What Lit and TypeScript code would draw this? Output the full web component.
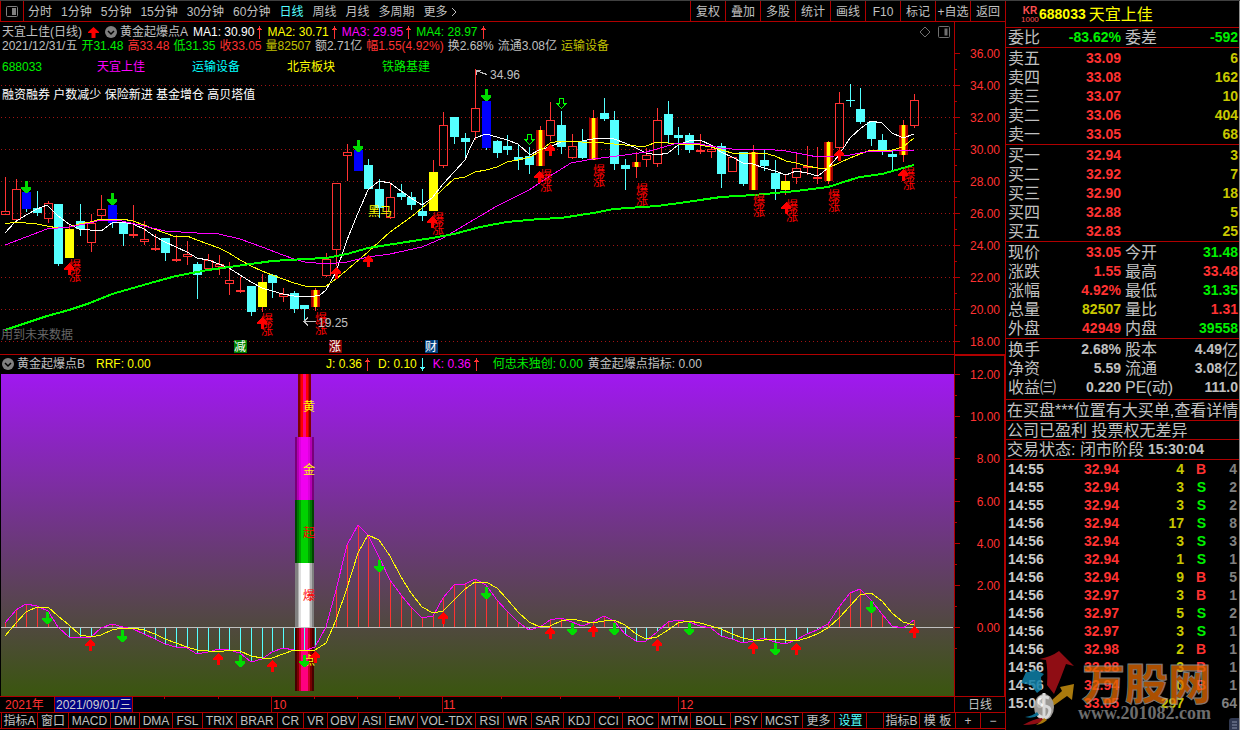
import { LitElement, html, svg, css } from "lit";
import { customElement } from "lit/decorators.js";
import { classMap } from "lit/directives/class-map.js";

/* ---------- data ---------- */

const PERIODS = ["分时", "1分钟", "5分钟", "15分钟", "30分钟", "60分钟", "日线", "周线", "月线", "多周期", "更多"];
const TOOLS = ["复权", "叠加", "多股", "统计", "画线", "F10", "标记", "+自选", "返回"];

const INDICATORS: [string, number][] = [
  ["指标A", 36], ["窗口", 31], ["MACD", 42], ["DMI", 29], ["DMA", 33], ["FSL", 30], ["TRIX", 34], ["BRAR", 41],
  ["CR", 26], ["VR", 24], ["OBV", 31], ["ASI", 27], ["EMV", 32], ["VOL-TDX", 58], ["RSI", 28], ["WR", 28],
  ["SAR", 32], ["KDJ", 31], ["CCI", 28], ["ROC", 36], ["MTM", 32], ["BOLL", 40], ["PSY", 31], ["MCST", 41],
  ["更多", 32], ["设置", 32],
];

const STEP = 10.69;
const cx = (i: number) => Math.round(5 + i * STEP);

/* kind, high, body top, body bottom, low — in pane pixels */
type Candle = [string, number, number, number, number];
const CANDLES: Candle[] = [
  ["r", 177, 211, 214, 214], ["r", 179, 189, 219, 219], ["b", 191, 192, 209, 212], ["c", 191, 208, 213, 216],
  ["r", 201, 203, 218, 222], ["c", 204, 204, 264, 266], ["y", 224, 229, 258, 258], ["c", 204, 221, 229, 236],
  ["r", 214, 223, 242, 251], ["r", 195, 209, 215, 220], ["b", 205, 205, 223, 228], ["c", 221, 223, 234, 246],
  ["r", 205, 234, 235, 237], ["r", 221, 239, 241, 244], ["r", 234, 248, 248, 250], ["c", 238, 238, 253, 261],
  ["r", 235, 259, 259, 261], ["r", 241, 254, 256, 264], ["c", 262, 264, 275, 299], ["r", 254, 260, 268, 269],
  ["r", 255, 264, 266, 274], ["r", 262, 280, 283, 294], ["r", 277, 290, 291, 292], ["c", 286, 286, 312, 316],
  ["y", 274, 282, 307, 312], ["c", 274, 275, 283, 298], ["r", 288, 294, 296, 301], ["c", 291, 293, 309, 313],
  ["c", 305, 305, 309, 322], ["g", 288, 290, 307, 311], ["r", 253, 259, 275, 276], ["r", 183, 183, 249, 265],
  ["r", 144, 152, 155, 180], ["b", 146, 150, 171, 171], ["c", 159, 165, 189, 190], ["c", 179, 189, 208, 218],
  ["r", 183, 197, 217, 218], ["c", 184, 193, 197, 200], ["c", 192, 197, 205, 210], ["c", 189, 211, 216, 221],
  ["y", 160, 172, 211, 211], ["r", 112, 125, 165, 167], ["c", 117, 117, 137, 144], ["c", 133, 138, 142, 158],
  ["r", 69, 108, 131, 139], ["b", 101, 101, 148, 150], ["c", 140, 141, 153, 158], ["c", 135, 146, 150, 155],
  ["c", 145, 157, 160, 170], ["c", 147, 156, 165, 174], ["g", 126, 130, 166, 166], ["r", 102, 120, 135, 140],
  ["c", 111, 125, 147, 154], ["r", 134, 146, 157, 158], ["c", 129, 141, 158, 159], ["g", 110, 118, 160, 160],
  ["c", 98, 113, 119, 121], ["c", 111, 120, 164, 170], ["c", 159, 165, 169, 190], ["g", 152, 162, 167, 178],
  ["r", 148, 155, 159, 166], ["r", 108, 120, 163, 166], ["c", 101, 114, 135, 143], ["c", 127, 135, 138, 155],
  ["c", 133, 135, 150, 153], ["r", 134, 150, 151, 153], ["r", 145, 149, 151, 157], ["c", 143, 146, 174, 188],
  ["r", 157, 157, 171, 171], ["c", 152, 152, 184, 186], ["g", 145, 152, 190, 190], ["c", 150, 160, 166, 171],
  ["c", 160, 173, 189, 200], ["y", 174, 181, 190, 195], ["r", 153, 168, 177, 183], ["r", 146, 166, 167, 174],
  ["r", 147, 177, 177, 183], ["g", 141, 142, 181, 184], ["r", 92, 103, 147, 148], ["c", 84, 100, 101, 107],
  ["c", 88, 109, 122, 124], ["c", 122, 122, 139, 146], ["c", 134, 140, 150, 155], ["c", 151, 154, 157, 170],
  ["g", 120, 125, 155, 162], ["r", 94, 100, 125, 127],
];

const MA1 = "5,233 15,222 26,215 37,209 47,205 58,216 69,224 79,229 90,230 101,231 112,223 122,222 133,224 144,229 154,236 165,242 176,247 187,252 197,258 208,260 219,264 229,268 240,275 251,282 262,288 272,291 283,294 294,296 315,296 320,295 326,290 336,272 347,240 358,213 368,190 379,181 390,183 401,191 411,198 422,205 432,198 443,184 454,172 465,160 470,148 475,138 486,134 497,137 507,140 518,144 530,155 539,150 550,147 561,142 582,141 593,139 604,138 614,139 625,143 636,148 646,153 657,155 668,153 678,145 689,141 700,140 711,145 721,152 732,157 743,163 753,164 764,168 775,171 786,175 796,171 807,173 818,176 828,168 839,155 850,138 861,128 871,121 882,123 892,133 903,138 914,134";
const MA2 = "5,224 15,222 26,223 37,224 47,226 58,228 69,227 79,224 90,222 101,219 122,219 133,221 144,225 154,229 165,233 176,237 187,236 197,240 208,244 219,248 229,253 240,260 251,266 262,271 272,275 283,279 294,283 305,286 315,287 326,286 336,279 347,270 368,252 390,232 411,217 432,200 443,189 454,179 465,177 475,172 486,170 497,167 507,162 518,160 530,157 539,152 550,143 561,141 571,141 582,142 604,143 614,144 636,146 646,146 657,142 678,144 700,145 711,147 732,153 743,154 764,153 775,156 786,161 796,163 807,166 818,168 828,168 839,163 850,158 860,154 871,150 892,150 903,147 914,138";
const MA3 = "5,245 26,237 47,229 69,227 90,223 101,220 122,221 144,226 165,231 197,233 219,234 240,239 262,247 283,255 294,259 305,262 326,264 347,262 368,257 390,254 422,247 443,238 475,219 497,206 529,190 550,176 571,163 593,159 625,155 646,152 678,143 700,144 721,148 743,150 764,149 786,151 807,155 818,157 850,155 871,151 892,151 914,150";
const MA4 = "5,330 26,323 47,316 69,310 90,303 112,294 133,288 154,282 176,276 208,270 229,267 251,264 272,261 305,259 326,258 347,254 368,248 400,243 432,238 454,234 480,227 507,222 540,219 561,218 593,213 614,209 657,206 680,203 700,200 721,197 754,195 775,193 796,191 828,187 850,180 860,177 882,174 903,168 914,165";

const BURSTS = [[69, 260], [261, 314], [315, 313], [432, 213], [540, 170], [593, 165], [636, 184], [753, 195], [786, 200], [828, 190], [903, 168]];
const UP_A = [[69, 263], [262, 317], [336, 267], [368, 255], [432, 216], [539, 171], [550, 144], [786, 202], [839, 149], [903, 169]];
const DOWN_A = [[26, 181], [112, 193], [358, 140], [486, 89]];
const HOLLOW_A = [[529, 134], [561, 98]];
const BADGES: [number, string, string][] = [[234, "减", "#008000"], [329, "涨", "#800000"], [425, "财", "#004080"]];

const FAST = [623, 610, 604, 606, 611, 627, 637, 637, 637, 628, 624, 627, 629, 634, 639, 644, 647, 648, 654, 652, 649, 650, 653, 662, 659, 652, 648, 650, 651, 647, 627, 590, 545, 525, 535, 557, 580, 595, 607, 618, 616, 598, 585, 584, 579, 585, 600, 611, 622, 630, 627, 620, 618, 622, 626, 622, 616, 621, 634, 641, 641, 632, 622, 620, 622, 626, 628, 636, 639, 643, 641, 638, 642, 644, 640, 634, 630, 624, 607, 593, 589, 600, 614, 626, 628, 620];
const SLOW = [636, 623, 612, 607, 607, 616, 625, 635, 637, 635, 630, 628, 628, 630, 634, 639, 643, 647, 650, 651, 652, 650, 651, 656, 658, 658, 654, 650, 650, 650, 643, 620, 588, 553, 535, 540, 556, 577, 593, 607, 613, 611, 600, 589, 582, 582, 588, 599, 612, 622, 627, 626, 621, 619, 621, 623, 621, 620, 625, 634, 639, 637, 630, 623, 621, 623, 626, 629, 634, 638, 640, 640, 639, 640, 641, 638, 634, 628, 618, 606, 595, 593, 601, 613, 622, 625];
const DOWN_B = [[47, 612], [122, 630], [240, 655], [304, 655], [379, 560], [486, 587], [572, 623], [614, 623], [689, 623], [775, 643], [871, 601]];
const UP_B = [[90, 639], [218, 653], [272, 660], [315, 651], [443, 612], [550, 627], [593, 625], [657, 639], [753, 642], [796, 643], [914, 626]];

/* stacked signal pillar: y, height, label, label colour, [x, width, colour] stripes */
const PILLAR: [number, number, string, string, [number, number, string][]][] = [
  [374, 63, "黄", "#ffff00", [[298, 13, "#800000"], [300, 9, "#c80000"], [301, 7, "#ff0000"], [303, 3, "#ff0080"]]],
  [437, 63, "金", "#ffff00", [[295, 19, "#7a007a"], [297, 15, "#b400b4"], [299, 11, "#dc00dc"], [301, 7, "#f000f0"]]],
  [500, 63, "起", "#ff0000", [[295, 19, "#004600"], [297, 15, "#007800"], [299, 11, "#00a000"], [301, 7, "#00d200"]]],
  [563, 64, "爆", "#ff0000", [[295, 19, "#808080"], [298, 14, "#b0b0b0"], [299, 11, "#e0e0e0"], [301, 8, "#ffffff"]]],
  [628, 63, "点", "#ffff00", [[295, 19, "#460000"], [297, 15, "#780000"], [299, 11, "#c80028"], [301, 7, "#ff0080"]]],
];

const ASKS = [["卖五", "33.09", "6"], ["卖四", "33.08", "162"], ["卖三", "33.07", "10"], ["卖二", "33.06", "404"], ["卖一", "33.05", "68"]];
const BIDS = [["买一", "32.94", "3"], ["买二", "32.92", "7"], ["买三", "32.90", "18"], ["买四", "32.88", "5"], ["买五", "32.83", "25"]];
const QUOTES = [
  ["现价", "33.05", "red", "今开", "31.48", "green"], ["涨跌", "1.55", "red", "最高", "33.48", "red"],
  ["涨幅", "4.92%", "red", "最低", "31.35", "green"], ["总量", "82507", "olive", "量比", "1.31", "red"],
  ["外盘", "42949", "red", "内盘", "39558", "green"],
];
const BASICS = [
  ["换手", "2.68%", "", "股本", "4.49亿", ""], ["净资", "5.59", "", "流通", "3.08亿", ""], ["收益㈢", "0.220", "", "PE(动)", "111.0", ""],
];
const TICKS = [
  ["14:55", "32.94", "4", "B", "4"], ["14:55", "32.94", "3", "S", "2"], ["14:55", "32.94", "3", "S", "2"],
  ["14:56", "32.94", "17", "S", "8"], ["14:56", "32.94", "3", "S", "3"], ["14:56", "32.94", "1", "S", "1"],
  ["14:56", "32.94", "9", "B", "5"], ["14:56", "32.97", "3", "B", "1"], ["14:56", "32.97", "5", "S", "2"],
  ["14:56", "32.97", "3", "S", "1"], ["14:56", "32.98", "2", "B", "1"], ["14:56", "32.98", "3", "B", "1"],
  ["14:56", "32.94", "0", "B", "1"], ["15:00", "33.05", "297", "", "64"],
];

/* ---------- shared glyphs ---------- */

const upArrow = ([x, y]: number[]) =>
  svg`<path fill="#ff0000" d="M${x} ${y}l5 5v2h-3v5h-3v-5h-4v-2z"/>`;
const downArrow = ([x, y]: number[]) =>
  svg`<path fill="#00dc00" d="M${x - 1} ${y}h3v6h3v2l-4 4h-1l-5 -4v-2h4z"/>`;
const hollowArrow = ([x, y]: number[]) =>
  svg`<path fill="none" stroke="#00ff00" d="M${x - 1.5} ${y + 0.5}h4v5h2.5l-4.5 5l-4.5 -5h2.5z"/>`;

const chevron = html`<svg class="glyph" width="12" height="12" viewBox="0 0 12 12"><circle cx="6" cy="6" r="6" fill="#808080"/><path d="M3 5l3 3l3-3" fill="none" stroke="#000" stroke-width="1.5"/></svg>`;
const trendUp = html`<svg class="glyph" width="5" height="13" viewBox="0 0 5 13"><path d="M2 0h1v13h-1zM1 2h3v1h-3zM0 3h5v1h-5z" fill="#ff3232"/></svg>`;
const trendDown = html`<svg class="glyph" width="5" height="13" viewBox="0 0 5 13"><path d="M2 0h1v13h-1zM1 10h3v1h-3zM0 9h5v1h-5z" fill="#54ffff"/></svg>`;

function candle([kind, hi, top, bot, lo]: Candle, i: number) {
  const x = cx(i);
  const h = bot - top;
  const red = kind === "r" || kind === "g" || kind === "y";
  const wick = red ? "#ff3232" : "#54ffff";
  if (kind === "r") {
    return svg`<path d="M${x + 0.5} ${hi}V${top}M${x + 0.5} ${bot + 1}V${lo + 1}" stroke=${wick}/>
      <rect x=${x - 3.5} y=${top + 0.5} width="8" height=${Math.max(h, 0.5)} fill="none" stroke=${wick}/>`;
  }
  const fill = kind === "b" ? "#0000ff" : kind === "y" ? "#ffff00" : kind === "g" ? "#a00000" : "#54ffff";
  return svg`<path d="M${x + 0.5} ${hi}V${lo}" stroke=${wick}/>
    <rect x=${x - 4} y=${top} width="9" height=${h} fill=${fill}/>
    ${kind === "g"
      ? svg`<rect x=${x - 2} y=${top} width="5" height=${h} fill="#ff3c00"/><rect x=${x - 1} y=${top} width="3" height=${h} fill="#ffff00"/>`
      : ""}`;
}

/* ---------- price pane ---------- */

@customElement("price-pane")
class PricePane extends LitElement {
  static styles = css`
    :host { display: grid; grid-template-columns: minmax(0, 1fr) 51px; }
    .plot, .legend { grid-area: 1 / 1; min-width: 0; }
    .plot, .axis { display: block; width: 100%; height: 332px; overflow: hidden; }
    .plot { shape-rendering: crispEdges; }
    .axis { border-left: 1px solid #b00000; box-sizing: border-box; }
    text { font-size: 12px; }
    .legend { padding: 3px 0 0 2px; line-height: 14px; white-space: nowrap; z-index: 1; }
    .line { display: flex; align-items: center; height: 14px; gap: 3px; }
    .daily { gap: 4px; }
    .glyph { flex: none; }
    .ma { display: flex; align-items: center; gap: 3px; margin-left: 2px; }
    .corner { margin-left: auto; margin-right: 3px; }
    .lead { margin: 0 3px; }
    .sectors { display: grid; grid-template-columns: repeat(5, 95px); margin: 7px 0 14px; }
    .white { color: #fff; } .yellow { color: #ff0; } .magenta { color: #f0f; } .green { color: #00f000; }
    .red { color: #ff3232; } .olive { color: #c0c000; } .cyan { color: #0ff; }
  `;

  render() {
    return html`
      <svg class="plot">
        <g transform="translate(0,-22)">
          ${[85, 117, 149, 181, 213, 245, 277, 309, 341].map((y) => svg`<line x1="1" x2="100%" y1=${y + 0.5} y2=${y + 0.5} stroke="#a01414" stroke-dasharray="1 3"/>`)}
          ${CANDLES.map(candle)}
          <polyline points=${MA1} fill="none" stroke="#fff"/>
          <polyline points=${MA2} fill="none" stroke="#ff0"/>
          <polyline points=${MA3} fill="none" stroke="#f0f"/>
          <polyline points=${MA4} fill="none" stroke="#0f0" stroke-width="2"/>
          ${UP_A.map(upArrow)} ${DOWN_A.map(downArrow)} ${HOLLOW_A.map(hollowArrow)}
          ${BURSTS.map(([x, y]) => svg`<text x=${x} y=${y + 10} fill="#f00">爆</text><text x=${x} y=${y + 21} fill="#f00">涨</text>`)}
          <text x="368" y="216" fill="#ff0">黑马</text>
          <path d="M487 74.5l-6 -2l-5 -2m0 4v-4h5" fill="none" stroke="#c0c0c0"/>
          <text x="490" y="79" fill="#c0c0c0">34.96</text>
          <path d="M316 321.5h-12m4 -4l-4 4l4 4" fill="none" stroke="#c0c0c0"/>
          <text x="318" y="327" fill="#c0c0c0">19.25</text>
          <text x="1" y="339" fill="#666">用到未来数据</text>
          ${BADGES.map(([x, t, c]) => svg`<rect x=${x} y="340" width="13" height="13" fill=${c}/><text x=${x} y="351" fill="#fff">${t}</text>`)}
        </g>
      </svg>
      <div class="legend">
        <div class="line">
          <span>天宜上佳(日线)</span>
          <svg class="glyph lead" width="11" height="11" viewBox="0 0 11 11"><path d="M5.500 0l5.500 5v1h-3.500v5h-4v-5h-3.500v-1z" fill="#f00"/></svg>
          ${chevron}
          <span>黄金起爆点A</span>
          <span class="ma white">MA1: 30.90 ${trendUp}</span>
          <span class="ma yellow">MA2: 30.71 ${trendUp}</span>
          <span class="ma magenta">MA3: 29.95 ${trendUp}</span>
          <span class="ma green">MA4: 28.97 ${trendUp}</span>
          <svg class="corner" width="32" height="12" viewBox="0 0 32 12" fill="none" stroke="#707070"><path d="M6 1l5 5l-5 5l-5-5z"/><rect x="19.500" y="0.500" width="11" height="11" rx="1"/><rect x="26" y="3" width="2" height="6" fill="#707070"/></svg>
        </div>
        <div class="line daily">
          <span>2021/12/31/五</span><span class="green">开31.48</span><span class="red">高33.48</span><span class="green">低31.35</span>
          <span class="red">收33.05</span><span class="olive">量82507</span><span>额2.71亿</span><span class="red">幅1.55(4.92%)</span>
          <span>换2.68%</span><span>流通3.08亿</span><span class="olive">运输设备</span>
        </div>
        <div class="sectors"><span class="green">688033</span><span class="magenta">天宜上佳</span><span class="cyan">运输设备</span><span class="yellow">北京板块</span><span class="green">铁路基建</span></div>
        <div class="line white">融资融券 户数减少 保险新进 基金增仓 高贝塔值</div>
      </div>
      <svg class="axis">
        <g transform="translate(0,-22)" fill="#ff3232">
          ${Array.from({ length: 10 }, (_, k) => svg`<path d="M0 ${53.5 + k * 32}h5M0 ${69.5 + k * 32}h2" stroke="#b00000" shape-rendering="crispEdges"/>
            <text x="15" y=${58 + k * 32}>${36 - 2 * k}.00</text>`)}
        </g>
      </svg>`;
  }
}

/* ---------- indicator pane ---------- */

@customElement("signal-pane")
class SignalPane extends LitElement {
  static styles = css`
    :host { display: grid; grid-template-columns: minmax(0, 1fr) 51px; }
    .head { display: flex; align-items: center; gap: 3px; height: 18px; padding: 0 0 1px 2px; white-space: nowrap; }
    .glyph { flex: none; }
    .rrf { margin-left: 8px; flex: 0 0 227px; }
    .item { display: flex; align-items: center; gap: 3px; margin-right: 5px; }
    .wide { margin-right: 11px; }
    .own { margin-right: 2px; }
    .plot { display: block; width: 100%; height: 322px; shape-rendering: crispEdges; overflow: hidden; background: linear-gradient(#a018f0, #3a560e); }
    .field { padding-left: 1px; }
    .axis { display: block; grid-area: 1 / 2 / 3 / 3; width: 100%; height: 341px; box-sizing: border-box; border: 1px solid #b00000; border-bottom: 0; }
    text { font-size: 12px; }
    .yellow { color: #ff0; } .magenta { color: #f0f; } .green { color: #00f000; }
  `;

  render() {
    const pts = (ys: number[]) => ys.map((y, i) => `${cx(i)},${y}`).join(" ");
    return html`
      <div class="head">
        ${chevron}<span>黄金起爆点B</span><span class="yellow rrf">RRF: 0.00</span>
        <span class="yellow item">J: 0.36 ${trendUp}</span>
        <span class="yellow item">D: 0.10 ${trendDown}</span>
        <span class="magenta item wide">K: 0.36 ${trendUp}</span>
        <span class="green own">何忠未独创: 0.00</span><span>黄金起爆点指标: 0.00</span>
      </div>
      <svg class="axis">
        <g transform="translate(0,-356)" fill="#ff3232">
          ${Array.from({ length: 7 }, (_, k) => {
            const y = Math.round(374 + k * 42.2);
            return svg`<path d="M0 ${y + 0.5}h5M0 ${y + 21.5}h2" stroke="#b00000" shape-rendering="crispEdges"/>
              <text x="45" text-anchor="end" y=${y + 5}>${12 - 2 * k}.00</text>`;
          })}
        </g>
      </svg>
      <div class="field">
      <svg class="plot">
        <g transform="translate(-1,-374)">
          ${PILLAR.map(([y, h, , , stripes]) => stripes.map(([x, w, c]) => svg`<rect x=${x} y=${y} width=${w} height=${h} fill=${c}/>`))}
          ${FAST.map((y, i) => (Math.abs(y - 627) < 2 ? "" : svg`<path d="M${cx(i) + 0.5} 627.5V${y}" stroke=${y < 627 ? "#ff3232" : "#54ffff"}/>`))}
          <rect x="0" y="627" width="100%" height="1" fill="#c0c0c0"/>
          ${PILLAR.map(([y, , t, c]) => svg`<text x="303" y=${y + 37} fill=${c}>${t}</text>`)}
          <polyline points=${pts(FAST)} fill="none" stroke="#f0f"/>
          <polyline points=${pts(SLOW)} fill="none" stroke="#ff0"/>
          ${UP_B.map(upArrow)} ${DOWN_B.map(downArrow)}
        </g>
      </svg>
      </div>`;
  }
}

/* ---------- quote side panel ---------- */

@customElement("quote-panel")
class QuotePanel extends LitElement {
  static styles = css`
    :host { display: block; position: relative; border-left: 1px solid #b00000; border-right: 1px solid #909090; font-size: 16px; line-height: 19px; white-space: nowrap; overflow: hidden; }
    section { border-bottom: 1px solid #b00000; padding: 1px 1px 0 2px; }
    b, td, .num { font: bold 14px/19px "Liberation Sans", "Noto Sans CJK SC", sans-serif; }
    .title { display: flex; align-items: center; height: 25px; color: #ff0; padding-left: 15px; }
    .tag { display: grid; font: bold 10px/9px "Liberation Sans", sans-serif; color: #ff5050; text-align: center; margin-right: 1px; width: 17px; }
    .tag small { font: 8px/9px "Liberation Sans", sans-serif; }
    .title b { margin-right: 3px; }
    .ratio { padding-top: 0; }
    .pair { display: grid; grid-template-columns: 1fr 1fr; column-gap: 4px; margin: 0; }
    .pair > div { display: flex; justify-content: space-between; height: 19px; }
    dt, dd { margin: 0; }
    dd { display: flex; align-items: center; height: 19px; }
    .basics { padding-bottom: 2px; }
    .unit { font: 16px/19px "Noto Sans CJK SC", sans-serif; }
    table { width: 100%; border-collapse: collapse; table-layout: fixed; }
    th { font-weight: normal; text-align: left; padding: 0; height: 19px; }
    td { padding: 0; text-align: right; height: 19px; }
    .note { display: flex; align-items: center; height: 19px; gap: 4px; padding: 0 1px; }
    .note a { color: inherit; text-decoration: none; }
    .n1 { height: 20px; } .n2 { height: 18px; }
    .ticks { padding: 0 2px; }
    .ticks td { height: 18px; line-height: 18px; }
    .ticks .time { text-align: left; color: #c8c8c8; }
    .ticks .side { padding-right: 10px; }
    .ticks .cnt { color: #808080; }
    .red { color: #ff3232; } .green { color: #00f000; } .olive { color: #c8c800; }
    .mark { position: absolute; right: 20px; bottom: 4px; width: 198px; height: 76px; display: grid; grid-template-columns: 57px 1fr; opacity: 0.85; pointer-events: none; }
    .mark .words { padding-top: 8px; }
    .mark strong { display: block; padding-left: 4px; font: 900 43px/46px "Noto Sans CJK SC", sans-serif; color: #e06800; -webkit-text-stroke: 1px #a0a0a0; opacity: 0.9; }
    .mark em { display: block; font: bold 18px/18px "Liberation Serif", serif; color: #808080; }
    .tray { position: absolute; right: 0; bottom: 0; width: 10px; height: 12px; background: #303850; border-radius: 3px 0 0 0; }
  `;

  private pairs(rows: string[][]) {
    const val = (v: string, c: string) => {
      const unit = v.endsWith("亿");
      return html`<dd class="num ${c}">${unit ? v.slice(0, -1) : v}${unit ? html`<span class="unit">亿</span>` : ""}</dd>`;
    };
    return html`<dl class="pair">${rows.map(
      ([a, av, ac, b, bv, bc]) => html`<div><dt>${a}</dt>${val(av, ac)}</div><div><dt>${b}</dt>${val(bv, bc)}</div>`
    )}</dl>`;
  }

  private book(rows: string[][]) {
    return html`<section><table><colgroup><col width="36"><col width="77"><col></colgroup>${rows.map(
      ([n, p, v]) => html`<tr><th scope="row">${n}</th><td class="red">${p}</td><td class="olive">${v}</td></tr>`
    )}</table></section>`;
  }

  render() {
    return html`
      <section class="title"><span class="tag">KR<small>1000</small></span><b>688033</b><span>天宜上佳</span></section>
      <section class="ratio">${this.pairs([["委比", "-83.62%", "green", "委差", "-592", "green"]])}</section>
      ${this.book(ASKS)} ${this.book(BIDS)}
      <section>${this.pairs(QUOTES)}</section>
      <section class="basics">${this.pairs(BASICS)}</section>
      <section class="note n1"><a href="#detail">在买盘***位置有大买单,查看详情</a></section>
      <section class="note n2">公司已盈利 投票权无差异</section>
      <section class="note"><span>交易状态: 闭市阶段</span><b>15:30:04</b></section>
      <div class="ticks">
        <table>
          <colgroup><col width="50"><col width="61"><col width="65"><col width="32"><col></colgroup>
          ${TICKS.map(
            ([t, p, v, s, c]) => html`<tr><td class="time">${t}</td><td class="red">${p}</td><td class="olive">${v}</td><td class="side ${s === "B" ? "red" : "green"}">${s}</td><td class="cnt">${c}</td></tr>`
          )}
        </table>
      </div>
      <div class="mark">
        <svg width="57" height="76" viewBox="0 0 57 76">
          <path d="M38 1l15 15l-8-2q-5 14-12 30l-7-9q1-15-1-25l-7-1q12-2 20-8z" fill="#a81018"/>
          <path d="M0 33l5-11h4l3-3l11 5l-3 3l1 12l-5 4l-6-8z" fill="#1080a8"/>
          <path d="M31 50l10-9l-2-4l14-3l-2 16l-5-4l-14 10z" fill="#c89010"/>
          <ellipse cx="23" cy="57" rx="10" ry="13" fill="#b8b4b0"/>
          <path d="M28 48q-9-3-10 2t6 6t4 8t-11 1M23 43v26" fill="none" stroke="#fff" stroke-width="3"/>
          <path d="M21 68q-9 1-19 7q13 0 21-4z" fill="#a81018"/>
          <path d="M16 62q-4 4-12 5q8 2 14-2z" fill="#1080a8"/>
          <path d="M23 68q-4 5-8 7q7-1 11-5z" fill="#c89010"/>
        </svg>
        <div class="words"><strong>万股网</strong><em>www.201082.com</em></div>
      </div>
      <svg class="tray" viewBox="0 0 10 12"><path d="M3 4h5M3 7h5M3 10h5" stroke="#8890a8"/></svg>`;
  }
}

/* ---------- shell ---------- */

@customElement("app-root")
class AppRoot extends LitElement {
  static styles = css`
    :host { display: grid; grid-template-columns: minmax(0, 1fr) 235px; min-height: 100vh; box-sizing: border-box; background: #000; color: #c0c0c0; border-top: 1px solid #404040; overflow: hidden; font: 12px/14px "Liberation Sans", "Noto Sans CJK SC", sans-serif; }
    main { min-width: 0; overflow: hidden; }
    button { font: inherit; color: inherit; background: none; border: 0; padding: 0; margin: 0; white-space: nowrap; }
    .bar { display: flex; height: 20px; border-bottom: 1px solid #b00000; }
    .bar .panel { width: 24px; border-left: 1px solid #b00000; border-right: 1px solid #b00000; margin-right: 4px; display: grid; place-items: center; }
    .periods { display: flex; gap: 9px; flex: 1; }
    .periods button, .tools button { padding-top: 2px; }
    .periods .active, .tabs .active { color: #54ffff; }
    .more { display: flex; align-items: center; gap: 3px; }
    .tools { display: flex; }
    .tools button { width: 35px; border-left: 1px solid #b00000; }
    price-pane, signal-pane { border-bottom: 1px solid #b00000; }
    .dates { display: flex; border-bottom: 1px solid #b00000; height: 15px; }
    .scale { flex: 1; min-width: 0; height: 15px; display: block; overflow: visible; }
    .scale text { font-size: 12px; }
    .dates button { width: 51px; box-sizing: border-box; border-left: 1px solid #b00000; }
    .tabs { display: flex; height: 15px; border-bottom: 1px solid #b00000; padding-left: 1px; }
    .tabs button { flex: none; box-sizing: border-box; border-left: 1px solid #b00000; line-height: 14px; padding-top: 1px; }
    .tabs .fill { flex: 1; border-left: 1px solid #b00000; }
    .tabs .w36 { width: 36px; } .tabs .w25 { width: 25px; }
  `;

  render() {
    return html`
      <main>
        <nav class="bar">
          <button class="panel" aria-label="面板"><svg width="12" height="11" viewBox="0 0 12 11"><rect x="0.500" y="0.500" width="11" height="10" rx="1" fill="none" stroke="#808080"/><rect x="6" y="2" width="4" height="7" fill="#808080"/></svg></button>
          <div class="periods">
            ${PERIODS.map((p) => html`<button class=${classMap({ active: p === "日线", more: p === "更多" })}>${p}${p === "更多"
              ? html`<svg width="7" height="10" viewBox="0 0 7 10"><path d="M1 1l4 4l-4 4" fill="none" stroke="#c0c0c0"/></svg>` : ""}</button>`)}
          </div>
          <div class="tools">${TOOLS.map((t) => html`<button>${t}</button>`)}</div>
        </nav>
        <price-pane></price-pane>
        <signal-pane></signal-pane>
        <div class="dates">
          <svg class="scale">
            <g stroke="#b00000" shape-rendering="crispEdges">
              ${[54, 271, 442, 678].map((x) => svg`<path d="M${x + 0.5} 0v15"/>`)}
              ${[164, 218, 314, 357, 399, 501, 560, 619].map((x) => svg`<path d="M${x + 0.5} 0v2"/>`)}
            </g>
            <rect x="55" y="0" width="77" height="15" fill="#000080"/>
            <path d="M132.500 0v15" stroke="#b00000"/>
            <text x="56" y="12" fill="#d0d0d0">2021/09/01/三</text>
            <g fill="#ff3232"><text x="5" y="12">2021年</text><text x="273" y="12">10</text><text x="443" y="12">11</text><text x="680" y="12">12</text></g>
          </svg>
          <button>日线</button>
        </div>
        <nav class="tabs">
          ${INDICATORS.map(([n, w]) => html`<button class=${classMap({ active: n === "设置" })} style="width:${w}px">${n}</button>`)}
          <span class="fill"></span>
          <button class="w36">指标B</button><button class="w36">模 板</button><button class="w25">+</button><button class="w25">−</button>
        </nav>
      </main>
      <quote-panel></quote-panel>`;
  }
}
